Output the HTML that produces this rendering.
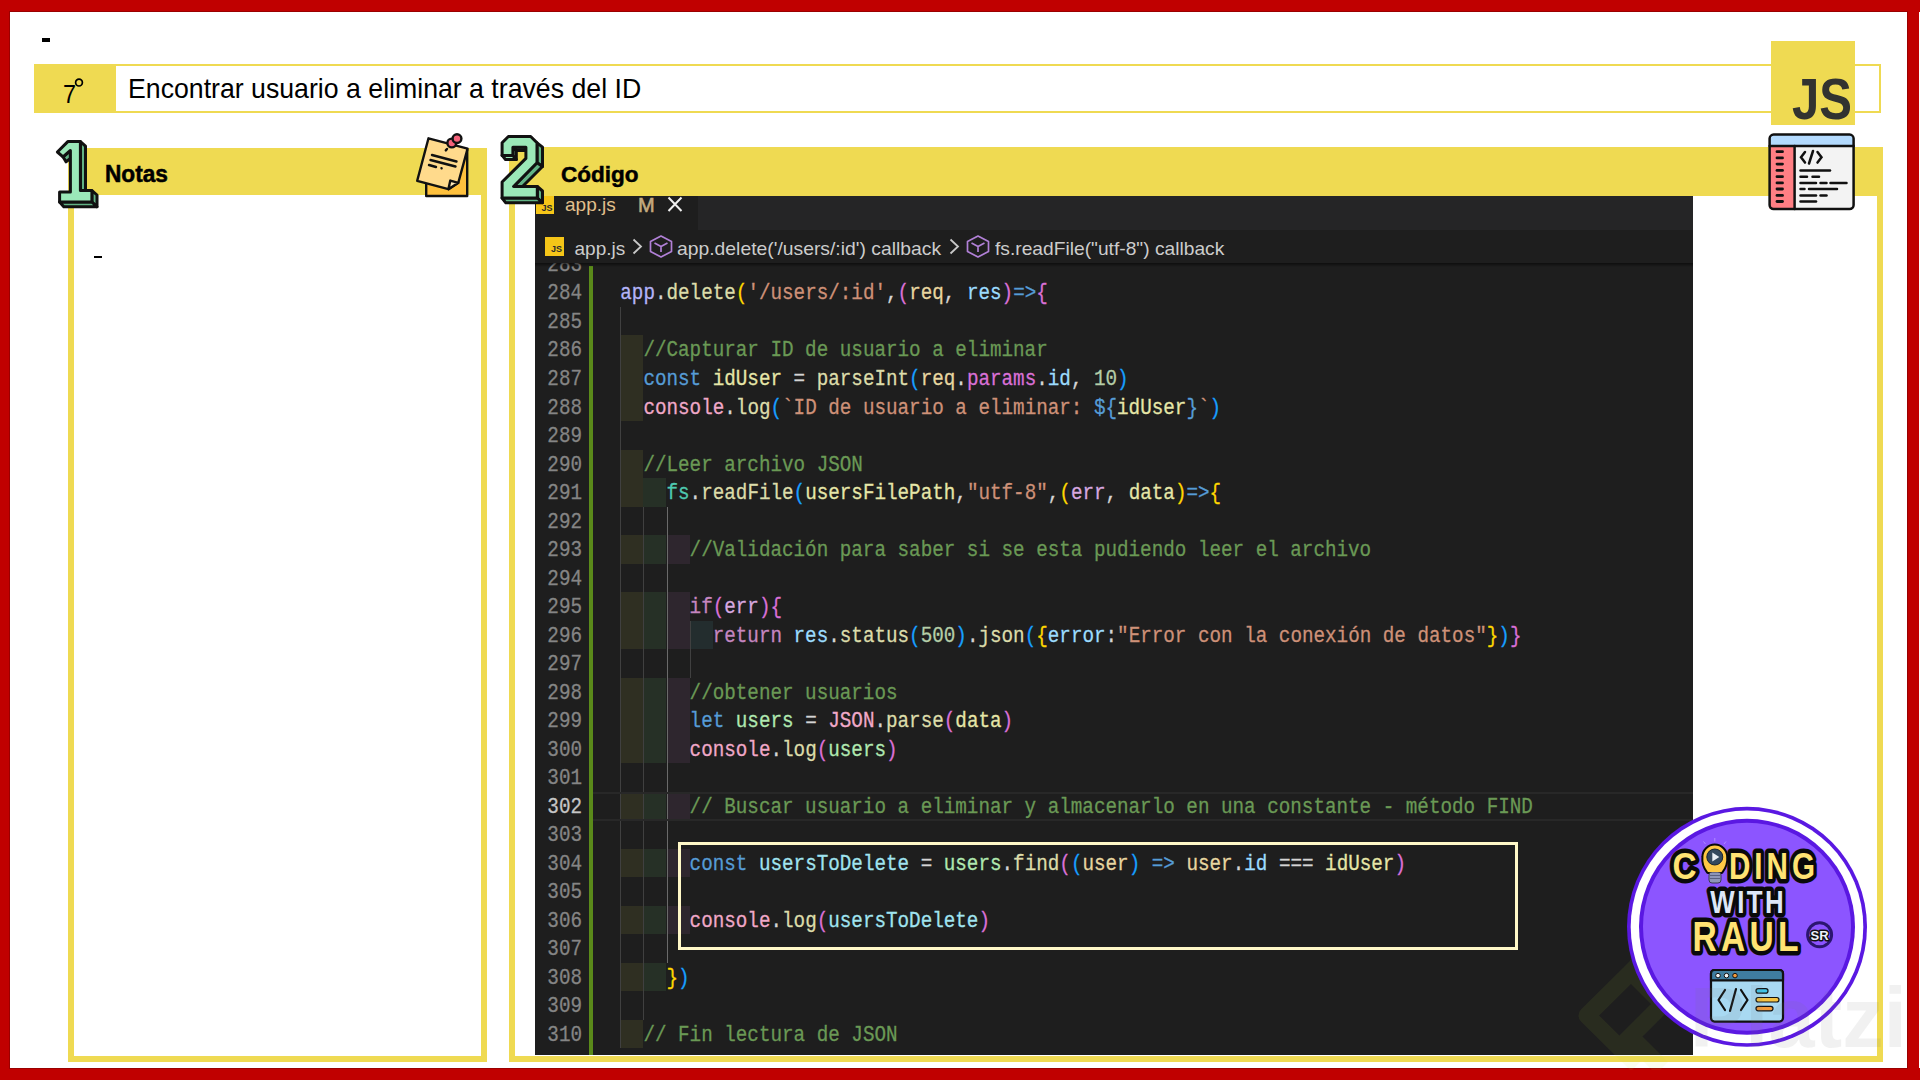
<!DOCTYPE html>
<html><head><meta charset="utf-8">
<style>
html,body{margin:0;padding:0}
body{width:1920px;height:1080px;position:relative;overflow:hidden;background:#fff;font-family:"Liberation Sans",sans-serif}
.a{position:absolute}
.cl{position:absolute;font-family:"Liberation Mono",monospace;font-size:19.26px;line-height:28.52px;white-space:pre;height:28.52px;transform-origin:0 7.3px;transform:scaleY(1.15);-webkit-text-stroke:0.25px currentColor}
.ln{position:absolute;left:536px;width:46px;text-align:right;font-family:"Liberation Mono",monospace;font-size:19.26px;line-height:28.52px;white-space:pre;transform-origin:0 7.3px;transform:scaleY(1.15);-webkit-text-stroke:0.25px currentColor}
</style></head><body>
<!-- red frame -->
<div class="a" style="left:0;top:0;width:1920px;height:12px;background:#C00000"></div>
<div class="a" style="left:0;top:1068px;width:1920px;height:12px;background:#C00000"></div>
<div class="a" style="left:0;top:0;width:10px;height:1080px;background:#C00000"></div>
<div class="a" style="left:1907px;top:0;width:12px;height:1080px;background:#C00000"></div>

<div class="a" style="left:9px;top:11px;width:1897px;height:1056px;border:1px solid #9A0000"></div>
<div class="a" style="left:42px;top:38px;width:8px;height:4px;background:#000"></div>

<!-- title -->
<div class="a" style="left:114px;top:64px;width:1763px;height:45px;border:2px solid #EFDA52"></div>
<div class="a" style="left:34px;top:64px;width:81px;height:49px;background:#EFDA52"></div>
<div class="a" style="left:63px;top:78.9px;font-size:26px;line-height:30px;color:#000;transform-origin:0 0;transform:scaleX(0.9)">7</div>
<svg class="a" style="left:70px;top:74px" width="18" height="18" viewBox="0 0 18 18"><circle cx="9" cy="8.6" r="3.4" fill="none" stroke="#000" stroke-width="1.7"/></svg>
<div class="a" style="left:128px;top:71px;font-size:28px;line-height:36px;color:#000;transform-origin:0 0;transform:scaleX(0.953);white-space:nowrap">Encontrar usuario a eliminar a través del ID</div>

<!-- JS logo -->
<div class="a" style="left:1771px;top:41px;width:84px;height:84px;background:#EFDA52"></div>
<div class="a" style="left:1792px;top:69px;font-size:58px;line-height:60px;font-weight:bold;color:#323330;transform-origin:0 0;transform:scaleX(0.846);white-space:nowrap">JS</div>

<!-- notes box -->
<div class="a" style="left:68px;top:148px;width:407px;height:908px;border:6px solid #EFDA52;border-top:0"></div>
<div class="a" style="left:68px;top:148px;width:419px;height:47px;background:#EFDA52"></div>
<div class="a" style="left:105px;top:158.75px;font-size:23px;line-height:30px;font-weight:bold;color:#000;transform-origin:0 0;transform:scaleX(0.985);-webkit-text-stroke:0.5px #000">Notas</div>
<div class="a" style="left:94px;top:256px;width:8px;height:2px;background:#000"></div>

<!-- code box -->
<div class="a" style="left:509px;top:147px;width:1362px;height:909px;border:6px solid #EFDA52;border-top:0"></div>
<div class="a" style="left:509px;top:147px;width:1374px;height:49px;background:#EFDA52"></div>
<div class="a" style="left:561px;top:159.7px;font-size:22.5px;line-height:30px;font-weight:bold;color:#000;transform-origin:0 0;transform:scaleX(1.0);-webkit-text-stroke:0.5px #000">Código</div>

<!-- vscode panel -->
<div class="a" style="left:535px;top:196px;width:1158px;height:859px;background:#1E1E1E;overflow:hidden;z-index:0">
 <div class="a" style="left:-535px;top:-196px;width:1920px;height:1080px">
  <!-- green git bar -->
  <div class="a" style="left:589px;top:266px;width:4px;height:800px;background:#5A8A1A"></div>

<div style="position:absolute;left:620.3px;top:335.4px;width:23.1px;height:28.52px;background:#2F2F22"></div>
<div style="position:absolute;left:620.3px;top:364.0px;width:23.1px;height:28.52px;background:#2F2F22"></div>
<div style="position:absolute;left:620.3px;top:392.5px;width:23.1px;height:28.52px;background:#2F2F22"></div>
<div style="position:absolute;left:620.3px;top:449.5px;width:23.1px;height:28.52px;background:#2F2F22"></div>
<div style="position:absolute;left:620.3px;top:478.0px;width:23.1px;height:28.52px;background:#2F2F22"></div>
<div style="position:absolute;left:643.4px;top:478.0px;width:23.1px;height:28.52px;background:#263026"></div>
<div style="position:absolute;left:620.3px;top:535.1px;width:23.1px;height:28.52px;background:#2F2F22"></div>
<div style="position:absolute;left:643.4px;top:535.1px;width:23.1px;height:28.52px;background:#263026"></div>
<div style="position:absolute;left:666.5px;top:535.1px;width:23.1px;height:28.52px;background:#2E262E"></div>
<div style="position:absolute;left:620.3px;top:592.1px;width:23.1px;height:28.52px;background:#2F2F22"></div>
<div style="position:absolute;left:643.4px;top:592.1px;width:23.1px;height:28.52px;background:#263026"></div>
<div style="position:absolute;left:666.5px;top:592.1px;width:23.1px;height:28.52px;background:#2E262E"></div>
<div style="position:absolute;left:620.3px;top:620.6px;width:23.1px;height:28.52px;background:#2F2F22"></div>
<div style="position:absolute;left:643.4px;top:620.6px;width:23.1px;height:28.52px;background:#263026"></div>
<div style="position:absolute;left:666.5px;top:620.6px;width:23.1px;height:28.52px;background:#2E262E"></div>
<div style="position:absolute;left:689.6px;top:620.6px;width:23.1px;height:28.52px;background:#232D2E"></div>
<div style="position:absolute;left:620.3px;top:677.7px;width:23.1px;height:28.52px;background:#2F2F22"></div>
<div style="position:absolute;left:643.4px;top:677.7px;width:23.1px;height:28.52px;background:#263026"></div>
<div style="position:absolute;left:666.5px;top:677.7px;width:23.1px;height:28.52px;background:#2E262E"></div>
<div style="position:absolute;left:620.3px;top:706.2px;width:23.1px;height:28.52px;background:#2F2F22"></div>
<div style="position:absolute;left:643.4px;top:706.2px;width:23.1px;height:28.52px;background:#263026"></div>
<div style="position:absolute;left:666.5px;top:706.2px;width:23.1px;height:28.52px;background:#2E262E"></div>
<div style="position:absolute;left:620.3px;top:734.7px;width:23.1px;height:28.52px;background:#2F2F22"></div>
<div style="position:absolute;left:643.4px;top:734.7px;width:23.1px;height:28.52px;background:#263026"></div>
<div style="position:absolute;left:666.5px;top:734.7px;width:23.1px;height:28.52px;background:#2E262E"></div>
<div style="position:absolute;left:620.3px;top:791.8px;width:23.1px;height:28.52px;background:#2F2F22"></div>
<div style="position:absolute;left:643.4px;top:791.8px;width:23.1px;height:28.52px;background:#263026"></div>
<div style="position:absolute;left:666.5px;top:791.8px;width:23.1px;height:28.52px;background:#2E262E"></div>
<div style="position:absolute;left:620.3px;top:848.8px;width:23.1px;height:28.52px;background:#2F2F22"></div>
<div style="position:absolute;left:643.4px;top:848.8px;width:23.1px;height:28.52px;background:#263026"></div>
<div style="position:absolute;left:666.5px;top:848.8px;width:23.1px;height:28.52px;background:#2E262E"></div>
<div style="position:absolute;left:620.3px;top:905.8px;width:23.1px;height:28.52px;background:#2F2F22"></div>
<div style="position:absolute;left:643.4px;top:905.8px;width:23.1px;height:28.52px;background:#263026"></div>
<div style="position:absolute;left:666.5px;top:905.8px;width:23.1px;height:28.52px;background:#2E262E"></div>
<div style="position:absolute;left:620.3px;top:962.9px;width:23.1px;height:28.52px;background:#2F2F22"></div>
<div style="position:absolute;left:643.4px;top:962.9px;width:23.1px;height:28.52px;background:#263026"></div>
<div style="position:absolute;left:620.3px;top:1019.9px;width:23.1px;height:28.52px;background:#2F2F22"></div>
<div style="position:absolute;left:620.3px;top:306.9px;width:1px;height:741.5px;background:#404040"></div>
<div style="position:absolute;left:643.4px;top:506.6px;width:1px;height:513.4px;background:#404040"></div>
<div style="position:absolute;left:666.5px;top:506.6px;width:1px;height:456.3px;background:#6A6A6A"></div>
<div style="position:absolute;left:689.6px;top:620.6px;width:1px;height:57.0px;background:#404040"></div>
<div style="position:absolute;left:593px;width:1100px;top:792.2px;height:24.5px;border-top:2px solid #282828;border-bottom:2px solid #282828"></div>
<div class="cl" style="left:620.3px;top:278.4px"><span style="color:#B4B4F8">app</span><span style="color:#D4D4D4">.</span><span style="color:#DCDCAA">delete</span><span style="color:#FFD700">(</span><span style="color:#CE9178">&#x27;/users/:id&#x27;</span><span style="color:#D4D4D4">,</span><span style="color:#DA70D6">(</span><span style="color:#E8D6A0">req</span><span style="color:#D4D4D4">, </span><span style="color:#9CDCFE">res</span><span style="color:#DA70D6">)</span><span style="color:#569CD6">=&gt;</span><span style="color:#DA70D6">{</span></div>
<div class="cl" style="left:643.4px;top:335.4px"><span style="color:#6A9955">//Capturar ID de usuario a eliminar</span></div>
<div class="cl" style="left:643.4px;top:364.0px"><span style="color:#569CD6">const</span><span style="color:#D4D4D4"> </span><span style="color:#E6E6A8">idUser</span><span style="color:#D4D4D4"> = </span><span style="color:#DCDCAA">parseInt</span><span style="color:#179FFF">(</span><span style="color:#E8D6A0">req</span><span style="color:#D4D4D4">.</span><span style="color:#DA70D6">params</span><span style="color:#D4D4D4">.</span><span style="color:#9CDCFE">id</span><span style="color:#D4D4D4">, </span><span style="color:#B5CEA8">10</span><span style="color:#179FFF">)</span></div>
<div class="cl" style="left:643.4px;top:392.5px"><span style="color:#F0A8C8">console</span><span style="color:#D4D4D4">.</span><span style="color:#DCDCAA">log</span><span style="color:#179FFF">(</span><span style="color:#CE9178">`ID de usuario a eliminar: </span><span style="color:#569CD6">${</span><span style="color:#E6E6A8">idUser</span><span style="color:#569CD6">}</span><span style="color:#CE9178">`</span><span style="color:#179FFF">)</span></div>
<div class="cl" style="left:643.4px;top:449.5px"><span style="color:#6A9955">//Leer archivo JSON</span></div>
<div class="cl" style="left:666.5px;top:478.0px"><span style="color:#4EC9B0">fs</span><span style="color:#D4D4D4">.</span><span style="color:#DCDCAA">readFile</span><span style="color:#179FFF">(</span><span style="color:#E6E6A8">usersFilePath</span><span style="color:#D4D4D4">,</span><span style="color:#CE9178">&quot;utf-8&quot;</span><span style="color:#D4D4D4">,</span><span style="color:#FFD700">(</span><span style="color:#D8A8E0">err</span><span style="color:#D4D4D4">, </span><span style="color:#E6E6A8">data</span><span style="color:#FFD700">)</span><span style="color:#569CD6">=&gt;</span><span style="color:#FFD700">{</span></div>
<div class="cl" style="left:689.6px;top:535.1px"><span style="color:#6A9955">//Validación para saber si se esta pudiendo leer el archivo</span></div>
<div class="cl" style="left:689.6px;top:592.1px"><span style="color:#C586C0">if</span><span style="color:#DA70D6">(</span><span style="color:#D8A8E0">err</span><span style="color:#DA70D6">)</span><span style="color:#DA70D6">{</span></div>
<div class="cl" style="left:712.7px;top:620.6px"><span style="color:#C586C0">return</span><span style="color:#D4D4D4"> </span><span style="color:#9CDCFE">res</span><span style="color:#D4D4D4">.</span><span style="color:#DCDCAA">status</span><span style="color:#179FFF">(</span><span style="color:#B5CEA8">500</span><span style="color:#179FFF">)</span><span style="color:#D4D4D4">.</span><span style="color:#DCDCAA">json</span><span style="color:#179FFF">(</span><span style="color:#FFD700">{</span><span style="color:#9CDCFE">error</span><span style="color:#D4D4D4">:</span><span style="color:#CE9178">&quot;Error con la conexión de datos&quot;</span><span style="color:#FFD700">}</span><span style="color:#179FFF">)</span><span style="color:#DA70D6">}</span></div>
<div class="cl" style="left:689.6px;top:677.7px"><span style="color:#6A9955">//obtener usuarios</span></div>
<div class="cl" style="left:689.6px;top:706.2px"><span style="color:#569CD6">let</span><span style="color:#D4D4D4"> </span><span style="color:#B0E8B0">users</span><span style="color:#D4D4D4"> = </span><span style="color:#F0A8C8">JSON</span><span style="color:#D4D4D4">.</span><span style="color:#DCDCAA">parse</span><span style="color:#DA70D6">(</span><span style="color:#E6E6A8">data</span><span style="color:#DA70D6">)</span></div>
<div class="cl" style="left:689.6px;top:734.7px"><span style="color:#F0A8C8">console</span><span style="color:#D4D4D4">.</span><span style="color:#DCDCAA">log</span><span style="color:#DA70D6">(</span><span style="color:#B0E8B0">users</span><span style="color:#DA70D6">)</span></div>
<div class="cl" style="left:689.6px;top:791.8px"><span style="color:#6A9955">// Buscar usuario a eliminar y almacenarlo en una constante - método FIND</span></div>
<div class="cl" style="left:689.6px;top:848.8px"><span style="color:#569CD6">const</span><span style="color:#D4D4D4"> </span><span style="color:#A0E4F0">usersToDelete</span><span style="color:#D4D4D4"> = </span><span style="color:#B0E8B0">users</span><span style="color:#D4D4D4">.</span><span style="color:#DCDCAA">find</span><span style="color:#DA70D6">(</span><span style="color:#179FFF">(</span><span style="color:#E8D6A0">user</span><span style="color:#179FFF">)</span><span style="color:#D4D4D4"> </span><span style="color:#569CD6">=&gt;</span><span style="color:#D4D4D4"> </span><span style="color:#E8D6A0">user</span><span style="color:#D4D4D4">.</span><span style="color:#9CDCFE">id</span><span style="color:#D4D4D4"> === </span><span style="color:#E6E6A8">idUser</span><span style="color:#DA70D6">)</span></div>
<div class="cl" style="left:689.6px;top:905.8px"><span style="color:#F0A8C8">console</span><span style="color:#D4D4D4">.</span><span style="color:#DCDCAA">log</span><span style="color:#DA70D6">(</span><span style="color:#A0E4F0">usersToDelete</span><span style="color:#DA70D6">)</span></div>
<div class="cl" style="left:666.5px;top:962.9px"><span style="color:#FFD700">}</span><span style="color:#179FFF">)</span></div>
<div class="cl" style="left:643.4px;top:1019.9px"><span style="color:#6A9955">// Fin lectura de JSON</span></div>
<div class="ln" style="top:249.9px;color:#858585">283</div>
<div class="ln" style="top:278.4px;color:#858585">284</div>
<div class="ln" style="top:306.9px;color:#858585">285</div>
<div class="ln" style="top:335.4px;color:#858585">286</div>
<div class="ln" style="top:364.0px;color:#858585">287</div>
<div class="ln" style="top:392.5px;color:#858585">288</div>
<div class="ln" style="top:421.0px;color:#858585">289</div>
<div class="ln" style="top:449.5px;color:#858585">290</div>
<div class="ln" style="top:478.0px;color:#858585">291</div>
<div class="ln" style="top:506.6px;color:#858585">292</div>
<div class="ln" style="top:535.1px;color:#858585">293</div>
<div class="ln" style="top:563.6px;color:#858585">294</div>
<div class="ln" style="top:592.1px;color:#858585">295</div>
<div class="ln" style="top:620.6px;color:#858585">296</div>
<div class="ln" style="top:649.2px;color:#858585">297</div>
<div class="ln" style="top:677.7px;color:#858585">298</div>
<div class="ln" style="top:706.2px;color:#858585">299</div>
<div class="ln" style="top:734.7px;color:#858585">300</div>
<div class="ln" style="top:763.2px;color:#858585">301</div>
<div class="ln" style="top:791.8px;color:#C6C6C6">302</div>
<div class="ln" style="top:820.3px;color:#858585">303</div>
<div class="ln" style="top:848.8px;color:#858585">304</div>
<div class="ln" style="top:877.3px;color:#858585">305</div>
<div class="ln" style="top:905.8px;color:#858585">306</div>
<div class="ln" style="top:934.4px;color:#858585">307</div>
<div class="ln" style="top:962.9px;color:#858585">308</div>
<div class="ln" style="top:991.4px;color:#858585">309</div>
<div class="ln" style="top:1019.9px;color:#858585">310</div>
  <!-- highlight box -->
  <div class="a" style="left:678px;top:842px;width:834px;height:102px;border:3px solid #FFF8C8"></div>

  <div class="a" style="left:535px;top:230px;width:1158px;height:33px;background:#1E1E1E;z-index:2"></div>
  <div class="a" style="left:535px;top:263px;width:1158px;height:4px;background:linear-gradient(rgba(0,0,0,0.55),rgba(0,0,0,0));z-index:2"></div>
  <div class="a" style="left:0;top:0;z-index:3">
  <!-- tab bar -->
  <div class="a" style="left:535px;top:196px;width:1158px;height:34px;background:#252526"></div>
  <div class="a" style="left:535px;top:196px;width:163px;height:34px;background:#1E1E1E"></div>
  <svg class="a" style="left:536px;top:190px" width="18" height="24" viewBox="0 0 18 24"><rect x="0" y="0" width="18" height="24" fill="#F5C518"/><text x="16.5" y="20.5" text-anchor="end" font-family="Liberation Sans" font-weight="bold" font-size="9" fill="#2A2A2A">JS</text></svg>
  <div class="a" style="left:565px;top:194px;font-size:19px;line-height:22px;color:#E2C08D;white-space:nowrap">app.js</div>
  <div class="a" style="left:638px;top:193.5px;font-size:20px;line-height:22px;color:#C4AA7E;white-space:nowrap;-webkit-text-stroke:0.6px #C4AA7E">M</div>
  <svg class="a" style="left:666px;top:196px" width="18" height="17" viewBox="0 0 18 17"><path d="M2.5 1.5 L15.5 15 M15.5 1.5 L2.5 15" stroke="#F0F0F0" stroke-width="2" fill="none"/></svg>
  <!-- breadcrumbs -->
  <div class="a" style="left:545px;top:237px;width:19px;height:19px;background:#F5C518"></div>
  <div class="a" style="left:551px;top:245px;font-size:9px;line-height:9px;font-weight:bold;color:#2A2A2A">JS</div>
  <div class="a" style="left:574.5px;top:237.5px;font-size:19px;line-height:22px;color:#CCCCCC;white-space:nowrap">app.js</div>
  <svg class="a" style="left:631px;top:238px" width="13" height="17" viewBox="0 0 13 17"><path d="M2.5 1.5 L10 8.5 L2.5 15.5" stroke="#C8C8C8" stroke-width="1.8" fill="none"/></svg>
  <svg class="a" style="left:649px;top:235px" width="24" height="23" viewBox="0 0 24 23"><g stroke="#B180D7" stroke-width="1.7" fill="none" stroke-linejoin="round"><path d="M12 1 L22.5 6.5 L22.5 16.5 L12 22 L1.5 16.5 L1.5 6.5 Z"/><path d="M5.5 8 L12 11.5 L18.5 8 M12 11.5 L12 17"/></g></svg>
  <div class="a" style="left:677px;top:237.5px;font-size:19px;line-height:22px;color:#CCCCCC;white-space:nowrap;transform-origin:0 0;transform:scaleX(1.017)">app.delete('/users/:id') callback</div>
  <svg class="a" style="left:948px;top:238px" width="13" height="17" viewBox="0 0 13 17"><path d="M2.5 1.5 L10 8.5 L2.5 15.5" stroke="#C8C8C8" stroke-width="1.8" fill="none"/></svg>
  <svg class="a" style="left:966px;top:235px" width="24" height="23" viewBox="0 0 24 23"><g stroke="#B180D7" stroke-width="1.7" fill="none" stroke-linejoin="round"><path d="M12 1 L22.5 6.5 L22.5 16.5 L12 22 L1.5 16.5 L1.5 6.5 Z"/><path d="M5.5 8 L12 11.5 L18.5 8 M12 11.5 L12 17"/></g></svg>
  <div class="a" style="left:995px;top:237.5px;font-size:19px;line-height:22px;color:#CCCCCC;white-space:nowrap;transform-origin:0 0;transform:scaleX(1.011)">fs.readFile("utf-8") callback</div>
  </div>
 </div>
</div>


<!-- icon 1 -->
<svg class="a" style="left:50px;top:132px" width="60" height="80" viewBox="0 0 60 80">
 <g stroke="#111" stroke-width="3" stroke-linejoin="round">
  <polygon fill="#62B385" points="30.4,9.6 35.5,14.2 35.5,58.5 30.4,58.5"/>
  <polygon fill="#62B385" points="41.9,58.5 47,63 47,74.8 41.9,70"/>
  <polygon fill="#62B385" points="9.6,70 41.9,70 47,74.8 13.8,74.8"/>
  <polygon fill="#62B385" points="13,24.8 20.4,18.5 20.4,26.5 16,29.8"/>
  <polygon fill="#9BE8B8" points="7.4,20 17.8,9.6 30.4,9.6 30.4,58.5 41.9,58.5 41.9,70 9.6,70 9.6,60 20.4,60 20.4,18.5 13,24.8"/>
 </g>
</svg>
<!-- icon 2 -->
<svg class="a" style="left:494px;top:128px" width="60" height="80" viewBox="0 0 60 80">
 <g stroke="#111" stroke-width="3" stroke-linejoin="round">
  <polygon fill="#62B385" points="43,14.8 48.5,19.2 48.5,38.5 43,34.8"/>
  <polygon fill="#62B385" points="43,34.8 48.5,38.5 28.5,58.5 19.6,58.5"/>
  <polygon fill="#62B385" points="43.3,58.5 48.5,63 48.5,74.8 43.3,70"/>
  <polygon fill="#62B385" points="8.1,70 43.3,70 48.5,74.8 11.8,74.8"/>
  <polygon fill="#9BE8B8" points="8.1,27.4 18.9,27.4 22.3,31.5 11.5,31.5"/>
  <polygon fill="#62B385" points="18.9,19.3 31.9,19.3 31.9,22.6 22.3,22.6"/>
  <polygon fill="#9BE8B8" points="18.9,19.3 22.3,22.6 22.3,31.5 18.9,27.4"/>
  <polygon fill="#9BE8B8" points="8.1,14.8 14.4,8.5 36.7,8.5 43,14.8 43,34.8 19.6,58.5 43.3,58.5 43.3,70 8.1,70 8.1,54 31.9,30.4 31.9,19.3 18.9,19.3 18.9,27.4 8.1,27.4"/>
 </g>
</svg>
<!-- sticky note -->
<svg class="a" style="left:410px;top:128px" width="66" height="74" viewBox="0 0 66 74">
 <g stroke="#111" stroke-width="2.4" stroke-linejoin="round" stroke-linecap="round">
  <rect x="16.2" y="22" width="41" height="46" fill="#FFC13D"/>
  <polygon fill="#FFDA8C" points="18.5,10.3 57.6,20.6 48.3,54.8 38.4,61.2 7.2,52.8"/>
  <polygon fill="#FFE9B8" points="48.3,54.8 40.3,52.6 38.4,61.2"/>
  <line x1="22" y1="27" x2="46.5" y2="33.5"/>
  <line x1="20.5" y1="32" x2="45.5" y2="38.5"/>
  <line x1="19" y1="37" x2="26" y2="39"/>
  <line x1="31.5" y1="40.2" x2="31.6" y2="40.3"/>
  <line x1="37" y1="21" x2="35.8" y2="22.4"/>
  <circle cx="41.8" cy="15" r="4.4" fill="#F4627A"/>
  <circle cx="47" cy="10.6" r="4.4" fill="#F4627A"/>
 </g>
</svg>
<!-- code window icon -->
<svg class="a" style="left:1768px;top:133px" width="88" height="78" viewBox="-1 -1 88 78">
 <rect x="0.6" y="0.6" width="84" height="74.5" rx="4" fill="#F3F3F3"/>
 <rect x="0.6" y="0.6" width="84" height="12" rx="3" fill="#B3DAFE"/>
 <rect x="0.6" y="12" width="25" height="63" fill="#FF7F84"/>
 <g stroke="#111" stroke-width="2.5" stroke-linecap="round" fill="none">
  <rect x="0.6" y="0.6" width="84" height="74.5" rx="4"/>
  <line x1="0.6" y1="12" x2="84.6" y2="12"/>
  <line x1="25.6" y1="12" x2="25.6" y2="75"/>
  <g stroke-width="2.8">
  <line x1="8" y1="17.7" x2="13.5" y2="17.7"/><line x1="8" y1="23.9" x2="13.5" y2="23.9"/><line x1="8" y1="30.1" x2="13.5" y2="30.1"/>
  <line x1="8" y1="36.4" x2="13.5" y2="36.4"/><line x1="8" y1="42.7" x2="13.5" y2="42.7"/><line x1="8" y1="48.9" x2="13.5" y2="48.9"/>
  <line x1="8" y1="55" x2="13.5" y2="55"/><line x1="8" y1="61.4" x2="13.5" y2="61.4"/><line x1="8" y1="67.5" x2="13.5" y2="67.5"/>
  </g>
  <polyline points="36,18 32,23.3 36,28.6"/>
  <line x1="44" y1="17" x2="40" y2="29.5"/>
  <polyline points="48.5,18 52.5,23.3 48.5,28.6"/>
  <line x1="31.5" y1="36.4" x2="61" y2="36.4"/>
  <line x1="31.5" y1="42.7" x2="38" y2="42.7"/><line x1="43.5" y1="42.7" x2="50" y2="42.7"/>
  <line x1="31.5" y1="49" x2="47" y2="49"/><line x1="51.5" y1="49" x2="57.5" y2="49"/><line x1="61.5" y1="49" x2="77.5" y2="49"/>
  <line x1="31.5" y1="55" x2="35.5" y2="55"/><line x1="40" y1="55" x2="68" y2="55"/>
  <line x1="31.5" y1="61.4" x2="47" y2="61.4"/><line x1="51.5" y1="61.4" x2="57.5" y2="61.4"/>
  <line x1="31.5" y1="67.5" x2="47" y2="67.5"/>
 </g>
</svg>

<!-- platzi diamond (over dark panel) -->
<svg class="a" style="left:1560px;top:940px" width="140" height="130" viewBox="0 0 140 130">
 <path d="M71 32 L27 75.5 L71 119 M71 32 L103 64 L71 96 M82 108 L96 122" fill="none" stroke="rgba(190,230,60,0.075)" stroke-width="17" stroke-linejoin="round" stroke-linecap="square"/>
</svg>
<!-- logo -->
<svg class="a" style="left:1620px;top:800px" width="260" height="260" viewBox="0 0 260 260">
 <circle cx="127" cy="126.85" r="120" fill="#5A18E2"/>
 <circle cx="127" cy="126.85" r="116.3" fill="#FFFFFF"/>
 <circle cx="127" cy="126.85" r="108" fill="#5A18E2"/>
 <circle cx="127" cy="126.85" r="104" fill="#8C55FF"/>
 <g font-family="Liberation Sans" font-weight="bold" stroke="#0A0A0A" stroke-width="9" stroke-linejoin="round" paint-order="stroke">
  <text transform="translate(52.5,79.4) scale(0.9,1)" font-size="37" fill="#FFE373">C</text>
  <text transform="translate(109,78.8) scale(0.8,1)" font-size="37" fill="#FFE373" letter-spacing="5">DING</text>
  <text transform="translate(90.3,113) scale(0.82,1)" font-size="31.5" fill="#DDE7F7" letter-spacing="3">WITH</text>
  <text transform="translate(72.6,150.5) scale(0.78,1)" font-size="43" fill="#FFE373" letter-spacing="5.5">RAUL</text>
 </g>
 <!-- bulb -->
 <g>
  <g stroke="#0A0A0A" stroke-width="4" stroke-linejoin="round"><path d="M88 72 Q82.5 65 83.4 57 A11.4 11.4 0 1 1 106.2 57 Q107 65 101.5 72 Z" fill="#0A0A0A"/></g>
  <rect x="89" y="72" width="12" height="11" rx="3" fill="#8E95B8" stroke="#3A3A50" stroke-width="1"/>
  <g stroke="#5A5F80" stroke-width="1"><line x1="89.5" y1="75.5" x2="100.5" y2="75.5"/><line x1="89.5" y1="78.5" x2="100.5" y2="78.5"/></g>
  <path d="M88 72 Q82.5 65 83.4 57 A11.4 11.4 0 1 1 106.2 57 Q107 65 101.5 72 Z" fill="#FFC845"/>
  <circle cx="94.8" cy="57" r="8" fill="#34495E" stroke="#1A2530" stroke-width="1"/>
  <path d="M92.3 52.5 L99.3 57 L92.3 61.5 Z" fill="#E8EEF5"/>
  <g stroke="#C8B0FF" stroke-width="1" opacity="0.6"><line x1="94.8" y1="38" x2="94.8" y2="41.5"/><line x1="83.5" y1="41.5" x2="85.5" y2="44"/><line x1="106" y1="41.5" x2="104" y2="44"/></g>
 </g>
 <!-- SR badge -->
 <circle cx="199.6" cy="134.8" r="13.5" fill="#2B1570"/>
 <circle cx="199.6" cy="134.8" r="10.5" fill="#8C53FF"/>
 <text x="199.6" y="140" text-anchor="middle" font-family="Liberation Sans" font-weight="bold" font-size="13" fill="#EEF2FA" stroke="#111" stroke-width="3" paint-order="stroke" stroke-linejoin="round">SR</text>
 <!-- code window -->
 <g stroke="#111" stroke-width="2.2" stroke-linejoin="round">
  <rect x="91" y="170" width="72" height="51.6" rx="3.5" fill="#A8D9F2"/>
  <path d="M91 180.3 L91 173.5 Q91 170 94.5 170 L159.5 170 Q163 170 163 173.5 L163 180.3 Z" fill="#3F7DA0"/>
 </g>
 <circle cx="98" cy="175.6" r="2.3" fill="#F5F5F5" stroke="#111" stroke-width="1"/>
 <circle cx="106.5" cy="175.6" r="2.3" fill="#F5F5F5" stroke="#111" stroke-width="1"/>
 <circle cx="115" cy="175.6" r="2.3" fill="#F49A3A" stroke="#111" stroke-width="1"/>
 <g stroke="#111" stroke-width="2.2" fill="none" stroke-linecap="round" stroke-linejoin="round">
  <polyline points="105,190 98.5,200 105,210"/>
  <line x1="116" y1="189" x2="110" y2="211"/>
  <polyline points="121,190 127.5,200 121,210"/>
 </g>
 <g stroke="#111" stroke-width="1.2">
  <rect x="136" y="188.6" width="12" height="4.5" rx="2.2" fill="#40C4E8"/>
  <rect x="136" y="197.5" width="23" height="4.5" rx="2.2" fill="#F5C242"/>
  <rect x="136" y="206.3" width="17" height="4.5" rx="2.2" fill="#F29B3E"/>
 </g>
</svg>
<!-- platzi text overlay -->
<div class="a" style="left:1690px;top:972px;font-size:86px;line-height:90px;font-weight:bold;color:rgba(120,120,120,0.10);white-space:nowrap;transform-origin:0 0;transform:scaleX(0.965)">Platzi</div>

</body></html>
